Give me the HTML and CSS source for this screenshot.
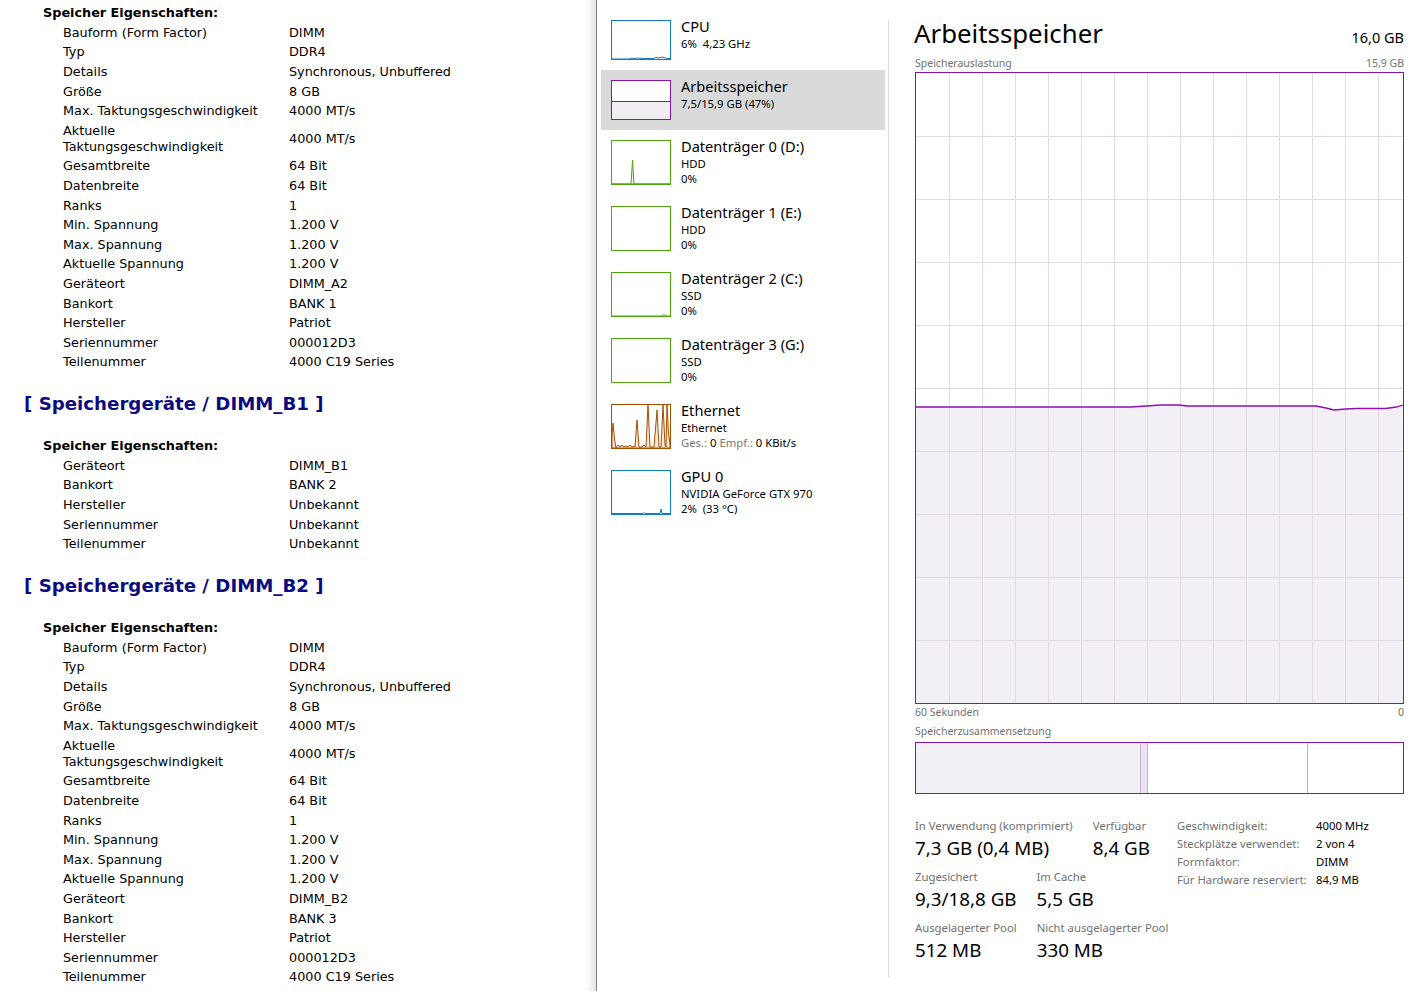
FILE: index.html
```html
<!DOCTYPE html>
<html lang="de">

<head>
    <meta charset="UTF-8">
    <meta name="viewport" content="width=device-width, initial-scale=1.0">
    <title>Arbeitsspeicher</title>
    <link rel="stylesheet" href="styles.css">
</head>

<body>
    <div class="report">
        <div class="prop-title">Speicher Eigenschaften:</div>
        <table class="prop-table">
            <tr><td class="key">Bauform (Form Factor)</td><td>DIMM</td></tr>
            <tr><td class="key">Typ</td><td>DDR4</td></tr>
            <tr><td class="key">Details</td><td>Synchronous, Unbuffered</td></tr>
            <tr><td class="key">Größe</td><td>8 GB</td></tr>
            <tr><td class="key">Max. Taktungsgeschwindigkeit</td><td>4000 MT/s</td></tr>
            <tr><td class="key">Aktuelle Taktungsgeschwindigkeit</td><td>4000 MT/s</td></tr>
            <tr><td class="key">Gesamtbreite</td><td>64 Bit</td></tr>
            <tr><td class="key">Datenbreite</td><td>64 Bit</td></tr>
            <tr><td class="key">Ranks</td><td>1</td></tr>
            <tr><td class="key">Min. Spannung</td><td>1.200 V</td></tr>
            <tr><td class="key">Max. Spannung</td><td>1.200 V</td></tr>
            <tr><td class="key">Aktuelle Spannung</td><td>1.200 V</td></tr>
            <tr><td class="key">Geräteort</td><td>DIMM_A2</td></tr>
            <tr><td class="key">Bankort</td><td>BANK 1</td></tr>
            <tr><td class="key">Hersteller</td><td>Patriot</td></tr>
            <tr><td class="key">Seriennummer</td><td>000012D3</td></tr>
            <tr><td class="key">Teilenummer</td><td>4000 C19 Series</td></tr>
        </table>

        <div class="device-head">[ Speichergeräte / DIMM_B1 ]</div>
        <div class="prop-title">Speicher Eigenschaften:</div>
        <table class="prop-table">
            <tr><td class="key">Geräteort</td><td>DIMM_B1</td></tr>
            <tr><td class="key">Bankort</td><td>BANK 2</td></tr>
            <tr><td class="key">Hersteller</td><td>Unbekannt</td></tr>
            <tr><td class="key">Seriennummer</td><td>Unbekannt</td></tr>
            <tr><td class="key">Teilenummer</td><td>Unbekannt</td></tr>
        </table>

        <div class="device-head">[ Speichergeräte / DIMM_B2 ]</div>
        <div class="prop-title">Speicher Eigenschaften:</div>
        <table class="prop-table">
            <tr><td class="key">Bauform (Form Factor)</td><td>DIMM</td></tr>
            <tr><td class="key">Typ</td><td>DDR4</td></tr>
            <tr><td class="key">Details</td><td>Synchronous, Unbuffered</td></tr>
            <tr><td class="key">Größe</td><td>8 GB</td></tr>
            <tr><td class="key">Max. Taktungsgeschwindigkeit</td><td>4000 MT/s</td></tr>
            <tr><td class="key">Aktuelle Taktungsgeschwindigkeit</td><td>4000 MT/s</td></tr>
            <tr><td class="key">Gesamtbreite</td><td>64 Bit</td></tr>
            <tr><td class="key">Datenbreite</td><td>64 Bit</td></tr>
            <tr><td class="key">Ranks</td><td>1</td></tr>
            <tr><td class="key">Min. Spannung</td><td>1.200 V</td></tr>
            <tr><td class="key">Max. Spannung</td><td>1.200 V</td></tr>
            <tr><td class="key">Aktuelle Spannung</td><td>1.200 V</td></tr>
            <tr><td class="key">Geräteort</td><td>DIMM_B2</td></tr>
            <tr><td class="key">Bankort</td><td>BANK 3</td></tr>
            <tr><td class="key">Hersteller</td><td>Patriot</td></tr>
            <tr><td class="key">Seriennummer</td><td>000012D3</td></tr>
            <tr><td class="key">Teilenummer</td><td>4000 C19 Series</td></tr>
        </table>
    </div>

    <div class="sidebar">
        <div class="perf-item short">
            <div class="thumb thumb-cpu">
                <svg viewBox="0 0 58 38" width="58" height="38">
                    <polyline points="0,38 18,38 19,37 22,37.5 26,37 31,37.5 41,37.5 44,36.5 47,37 50,36 53,37 55,37.5 58,37.5" fill="none" stroke="#117dbb" stroke-width="1"/>
                </svg>
            </div>
            <div class="perf-text">
                <div class="perf-name">CPU</div>
                <div class="perf-sub">6%&nbsp; 4,23 GHz</div>
            </div>
        </div>
        <div class="perf-item short active">
            <div class="thumb thumb-mem">
                <svg viewBox="0 0 58 38" width="58" height="38">
                    <polygon points="0,20.5 58,20.5 58,38 0,38" fill="#f1edf3"/>
                    <line x1="0" y1="20.5" x2="58" y2="20.5" stroke="#8b12ae" stroke-width="1"/>
                </svg>
            </div>
            <div class="perf-text">
                <div class="perf-name">Arbeitsspeicher</div>
                <div class="perf-sub">7,5/15,9 GB (47%)</div>
            </div>
        </div>
        <div class="perf-item">
            <div class="thumb thumb-disk">
                <svg viewBox="0 0 58 43" width="58" height="43">
                    <polygon points="0,43 19,43 20.5,19 22,43 58,43" fill="#eef6e8" stroke="#4da60c" stroke-width="1"/>
                </svg>
            </div>
            <div class="perf-text">
                <div class="perf-name">Datenträger 0 (D:)</div>
                <div class="perf-sub">HDD</div>
                <div class="perf-sub">0%</div>
            </div>
        </div>
        <div class="perf-item">
            <div class="thumb thumb-disk"></div>
            <div class="perf-text">
                <div class="perf-name">Datenträger 1 (E:)</div>
                <div class="perf-sub">HDD</div>
                <div class="perf-sub">0%</div>
            </div>
        </div>
        <div class="perf-item">
            <div class="thumb thumb-disk">
                <svg viewBox="0 0 58 43" width="58" height="43">
                    <polyline points="0,43 50,43 52,41.5 54,43 58,43" fill="none" stroke="#4da60c" stroke-width="1"/>
                </svg>
            </div>
            <div class="perf-text">
                <div class="perf-name">Datenträger 2 (C:)</div>
                <div class="perf-sub">SSD</div>
                <div class="perf-sub">0%</div>
            </div>
        </div>
        <div class="perf-item">
            <div class="thumb thumb-disk"></div>
            <div class="perf-text">
                <div class="perf-name">Datenträger 3 (G:)</div>
                <div class="perf-sub">SSD</div>
                <div class="perf-sub">0%</div>
            </div>
        </div>
        <div class="perf-item">
            <div class="thumb thumb-eth">
                <svg viewBox="0 0 58 43" width="58" height="43">
                    <polygon points="0,43 0,30 1,18 2.5,34 4,43 6,40 8,42 10,40 12,42 14,41 16,42 18,40 20,42 22,41 23,42 25,15 27,42 30,42 32,40 34,42 36,0 38,42 42,42 45,5 47,42 49,42 51,0 53,40 54,42 55,0 56.5,28 58,40 58,43" fill="#f5e9df" stroke="#a74f01" stroke-width="1" stroke-linejoin="round"/>
                </svg>
            </div>
            <div class="perf-text">
                <div class="perf-name">Ethernet</div>
                <div class="perf-sub">Ethernet</div>
                <div class="perf-sub"><span class="muted">Ges.:</span> 0 <span class="muted">Empf.:</span> 0 KBit/s</div>
            </div>
        </div>
        <div class="perf-item">
            <div class="thumb thumb-gpu">
                <svg viewBox="0 0 58 43" width="58" height="43">
                    <polyline points="0,42.5 31,42.5 32,41.5 33,42.5 48,42.5 49,38 50,42.5 58,42.5" fill="#e8f2f8" stroke="#117dbb" stroke-width="1"/>
                </svg>
            </div>
            <div class="perf-text">
                <div class="perf-name">GPU 0</div>
                <div class="perf-sub">NVIDIA GeForce GTX 970</div>
                <div class="perf-sub">2%&nbsp; (33 °C)</div>
            </div>
        </div>
    </div>

    <div class="divider"></div>

    <div class="details">
        <div class="perf-header">
            <div class="perf-title">Arbeitsspeicher</div>
            <div class="perf-total">16,0 GB</div>
        </div>
        <div class="graph-caption">
            <span>Speicherauslastung</span>
            <span>15,9 GB</span>
        </div>
        <div class="graph">
            <svg viewBox="0 0 487 630" width="487" height="630" preserveAspectRatio="none">
                <polygon points="0,334 215,334 230,333 245,332 262,332 272,333 400,333 410,335 418,337 430,336 440,335.5 470,335.5 480,334 487,332 487,630 0,630" fill="#f3f0f5"/>
                <g stroke="#e2dde5" stroke-width="1">
                    <line x1="0" y1="63.5" x2="487" y2="63.5"/>
                    <line x1="0" y1="126.5" x2="487" y2="126.5"/>
                    <line x1="0" y1="189.5" x2="487" y2="189.5"/>
                    <line x1="0" y1="252.5" x2="487" y2="252.5"/>
                    <line x1="0" y1="315.5" x2="487" y2="315.5"/>
                    <line x1="0" y1="378.5" x2="487" y2="378.5"/>
                    <line x1="0" y1="441.5" x2="487" y2="441.5"/>
                    <line x1="0" y1="504.5" x2="487" y2="504.5"/>
                    <line x1="0" y1="567.5" x2="487" y2="567.5"/>
                    <line x1="33.5" y1="0" x2="33.5" y2="630"/>
                    <line x1="66.5" y1="0" x2="66.5" y2="630"/>
                    <line x1="99.5" y1="0" x2="99.5" y2="630"/>
                    <line x1="132.5" y1="0" x2="132.5" y2="630"/>
                    <line x1="165.5" y1="0" x2="165.5" y2="630"/>
                    <line x1="198.5" y1="0" x2="198.5" y2="630"/>
                    <line x1="231.5" y1="0" x2="231.5" y2="630"/>
                    <line x1="264.5" y1="0" x2="264.5" y2="630"/>
                    <line x1="297.5" y1="0" x2="297.5" y2="630"/>
                    <line x1="330.5" y1="0" x2="330.5" y2="630"/>
                    <line x1="363.5" y1="0" x2="363.5" y2="630"/>
                    <line x1="396.5" y1="0" x2="396.5" y2="630"/>
                    <line x1="429.5" y1="0" x2="429.5" y2="630"/>
                    <line x1="462.5" y1="0" x2="462.5" y2="630"/>
                </g>
                <polyline points="0,334 215,334 230,333 245,332 262,332 272,333 400,333 410,335 418,337 430,336 440,335.5 470,335.5 480,334 487,332" fill="none" stroke="#8b12ae" stroke-width="1.3"/>
            </svg>
        </div>
        <div class="graph-caption graph-foot">
            <span>60 Sekunden</span>
            <span>0</span>
        </div>
        <div class="graph-caption comp-caption">
            <span>Speicherzusammensetzung</span>
        </div>
        <div class="composition">
            <div class="comp-used"></div>
            <div class="comp-modified"></div>
            <div class="comp-standby"></div>
            <div class="comp-free"></div>
        </div>

        <div class="stats">
            <div class="stats-main">
                <div class="stat-row">
                    <div class="stat">
                        <div class="stat-label">In Verwendung (komprimiert)</div>
                        <div class="stat-value">7,3 GB (0,4 MB)</div>
                    </div>
                    <div class="stat">
                        <div class="stat-label">Verfügbar</div>
                        <div class="stat-value">8,4 GB</div>
                    </div>
                </div>
                <div class="stat-row">
                    <div class="stat">
                        <div class="stat-label">Zugesichert</div>
                        <div class="stat-value">9,3/18,8 GB</div>
                    </div>
                    <div class="stat">
                        <div class="stat-label">Im Cache</div>
                        <div class="stat-value">5,5 GB</div>
                    </div>
                </div>
                <div class="stat-row">
                    <div class="stat">
                        <div class="stat-label">Ausgelagerter Pool</div>
                        <div class="stat-value">512 MB</div>
                    </div>
                    <div class="stat">
                        <div class="stat-label">Nicht ausgelagerter Pool</div>
                        <div class="stat-value">330 MB</div>
                    </div>
                </div>
            </div>
            <table class="hw-table">
                <tr><td class="hw-key">Geschwindigkeit:</td><td>4000 MHz</td></tr>
                <tr><td class="hw-key">Steckplätze verwendet:</td><td>2 von 4</td></tr>
                <tr><td class="hw-key">Formfaktor:</td><td>DIMM</td></tr>
                <tr><td class="hw-key">Für Hardware reserviert:</td><td>84,9 MB</td></tr>
            </table>
        </div>
    </div>
</body>

</html>
```

FILE: styles.css
```css
* {
    box-sizing: border-box;
}

body {
    margin: 0;
    height: 991px;
    overflow: hidden;
    display: flex;
    background-color: #fff;
    color: #000;
}

/* report on the left */

.report {
    width: 597px;
    flex: none;
    padding-top: 5px;
    border-right: 1px solid #7c7c7c;
    box-shadow: inset -12px 0 10px -8px rgba(0, 0, 0, 0.13);
    font-family: "DejaVu Sans", Verdana, sans-serif;
    font-size: 12.8px;
    overflow: hidden;
}

.prop-title {
    font-weight: bold;
    line-height: 16px;
    padding-left: 43px;
    margin-bottom: 2px;
}

.prop-table {
    margin-left: 63px;
    border-collapse: collapse;
    table-layout: fixed;
}

.prop-table td {
    padding: 1.8px 0;
    line-height: 16px;
    vertical-align: middle;
}

.prop-table td.key {
    width: 226px;
    padding-right: 20px;
}

.device-head {
    color: #0b0b80;
    font-size: 18.2px;
    font-weight: bold;
    line-height: 22px;
    padding-left: 24px;
    margin: 21px 0 23px;
}

/* task manager sidebar */

.sidebar {
    width: 291px;
    flex: none;
    padding: 10px 3px 0 4px;
    font-family: "Noto Sans", sans-serif;
}

.perf-item {
    display: flex;
    gap: 10px;
    height: 66px;
    padding: 10px 10px 0;
}

.perf-item.short {
    height: 60px;
}

.perf-item.active {
    background-color: #dadada;
}

.thumb {
    width: 60px;
    height: 45px;
    flex: none;
    border: 1px solid;
    background-color: #fff;
}

.thumb svg {
    display: block;
}

.short .thumb {
    height: 40px;
}

.thumb-cpu,
.thumb-gpu {
    border-color: #117dbb;
}

.thumb-mem {
    border-color: #8b12ae;
}

.thumb-disk {
    border-color: #4da60c;
}

.thumb-eth {
    border-color: #a74f01;
}

.perf-name {
    font-size: 14.6px;
    line-height: 20px;
    margin-top: -4px;
}

.perf-sub {
    font-size: 11.3px;
    line-height: 15px;
}

.muted {
    color: #777;
}

.divider {
    width: 1px;
    flex: none;
    margin: 20px 0 13px;
    background-color: #dcdcdc;
}

/* memory details */

.details {
    flex: 1;
    padding: 15px 17px 0 26px;
    font-family: "Noto Sans", sans-serif;
}

.perf-header {
    display: flex;
    justify-content: space-between;
    align-items: baseline;
    margin-left: -1px;
}

.perf-title {
    font-size: 25.8px;
    line-height: 37px;
}

.perf-total {
    font-size: 14.5px;
}

.graph-caption {
    display: flex;
    justify-content: space-between;
    font-size: 10.5px;
    line-height: 14px;
    color: #707070;
    margin-top: 4px;
}

.graph {
    height: 632px;
    margin-top: 2px;
    border: 1px solid #8b12ae;
}

.graph svg {
    display: block;
}

.graph-foot {
    margin-top: 1px;
}

.comp-caption {
    margin-top: 5px;
}

.composition {
    display: flex;
    height: 52px;
    margin-top: 4px;
    border: 1px solid #8b12ae;
}

.comp-used {
    width: 225px;
    background-color: #f3f0f5;
    border-right: 1px solid #c6b4cd;
}

.comp-modified {
    width: 7px;
    background-color: #ede2f0;
    border-right: 1px solid #c6b4cd;
}

.comp-standby {
    width: 160px;
    border-right: 1px solid #c6b4cd;
}

.comp-free {
    flex: 1;
}

.stats {
    display: flex;
    margin-top: 23px;
}

.stats-main {
    width: 262px;
    flex: none;
}

.stat-row {
    display: flex;
    gap: 20px;
    margin-bottom: 6px;
}

.stat-label {
    font-size: 11.3px;
    line-height: 17px;
    color: #707070;
}

.stat-value {
    font-size: 18.8px;
    line-height: 28px;
}

.hw-table {
    border-collapse: collapse;
    font-size: 11.3px;
    align-self: flex-start;
}

.hw-table td {
    padding: 0;
    line-height: 18px;
}

.hw-table td.hw-key {
    width: 139px;
    color: #707070;
}
```
